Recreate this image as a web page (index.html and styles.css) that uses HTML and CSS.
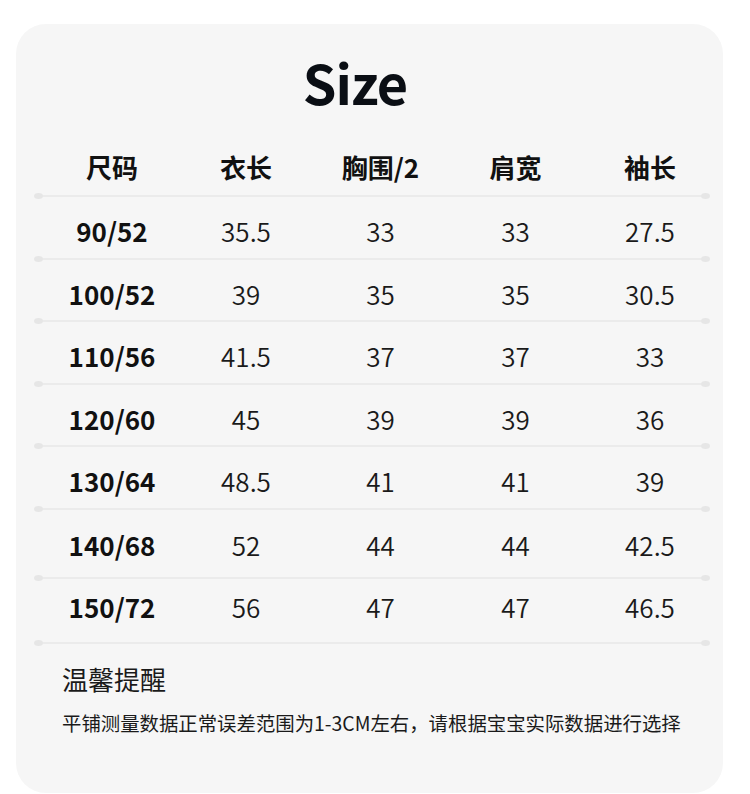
FILE: index.html
```html
<!DOCTYPE html>
<html lang="zh-CN">
<head>
<meta charset="utf-8">
<title>Size</title>
<link rel="stylesheet" href="styles.css">
</head>
<body>
<div class="card">
  <h1 class="title">Size</h1>
  <div class="table">
    <div class="row head">
      <span>尺码</span><span>衣长</span><span>胸围/2</span><span>肩宽</span><span>袖长</span>
    </div>
    <div class="divider"></div>
    <div class="row"><span class="lbl">90/52</span><span>35.5</span><span>33</span><span>33</span><span>27.5</span></div>
    <div class="divider"></div>
    <div class="row"><span class="lbl">100/52</span><span>39</span><span>35</span><span>35</span><span>30.5</span></div>
    <div class="divider"></div>
    <div class="row"><span class="lbl">110/56</span><span>41.5</span><span>37</span><span>37</span><span>33</span></div>
    <div class="divider"></div>
    <div class="row"><span class="lbl">120/60</span><span>45</span><span>39</span><span>39</span><span>36</span></div>
    <div class="divider"></div>
    <div class="row"><span class="lbl">130/64</span><span>48.5</span><span>41</span><span>41</span><span>39</span></div>
    <div class="divider"></div>
    <div class="row r6"><span class="lbl">140/68</span><span>52</span><span>44</span><span>44</span><span>42.5</span></div>
    <div class="divider"></div>
    <div class="row r7"><span class="lbl">150/72</span><span>56</span><span>47</span><span>47</span><span>46.5</span></div>
    <div class="divider"></div>
  </div>
  <div class="notes">
    <div class="notes-title">温馨提醒</div>
    <p class="notes-text">平铺测量数据正常误差范围为1-3CM左右，请根据宝宝实际数据进行选择</p>
  </div>
</div>
</body>
</html>
```

FILE: styles.css
```css
* { box-sizing: border-box; }

html, body {
  margin: 0;
  padding: 0;
  background: #ffffff;
}

body {
  font-family: "Noto Sans CJK SC", "Noto Sans", sans-serif;
  color: #141414;
}

.card {
  margin: 24px 0 0 16px;
  width: 707px;
  height: 769px;
  background: #f6f6f6;
  border-radius: 30px;
  padding: 26px 0 0 18px;
}

.title {
  margin: 0;
  text-align: center;
  font-size: 54px;
  line-height: 64px;
  font-weight: 700;
  color: #0a0e14;
  padding-right: 47px;
  letter-spacing: -1px;
}

.table {
  width: 676px;
}

.row {
  display: grid;
  grid-template-columns: 134px 134px 135px 135px 134px;
  padding-left: 11px;
  padding-top: 7px;
  line-height: 53.5px;
  font-size: 26px;
  font-weight: 350;
  color: #1a1a1a;
  text-align: center;
  white-space: nowrap;
}

.row.head {
  padding-top: 26px;
  padding-bottom: 1px;
  line-height: 54px;
  font-weight: 700;
  font-size: 26px;
  color: #111111;
}

.row.r6 {
  padding-top: 8.75px;
  padding-bottom: 5.25px;
}

.row.r7 {
  padding-top: 1.25px;
  padding-bottom: 8.25px;
}

.lbl {
  font-weight: 700;
  color: #111111;
}

.divider {
  position: relative;
  height: 2px;
  margin: 0 4px;
  background: #ebebeb;
}

.divider::before,
.divider::after {
  content: "";
  position: absolute;
  top: -2px;
  width: 9px;
  height: 6px;
  border-radius: 50%;
  background: #e6e6e6;
}

.divider::before { left: -4px; }
.divider::after { right: -4px; }

.notes {
  padding-left: 28px;
  padding-top: 17px;
}

.notes-title {
  font-size: 26px;
  line-height: 36px;
  color: #1a1a1a;
  font-weight: 400;
}

.notes-text {
  margin: 12px 0 0 0;
  font-size: 19.4px;
  line-height: 28px;
  color: #1a1a1a;
  white-space: nowrap;
}
```
